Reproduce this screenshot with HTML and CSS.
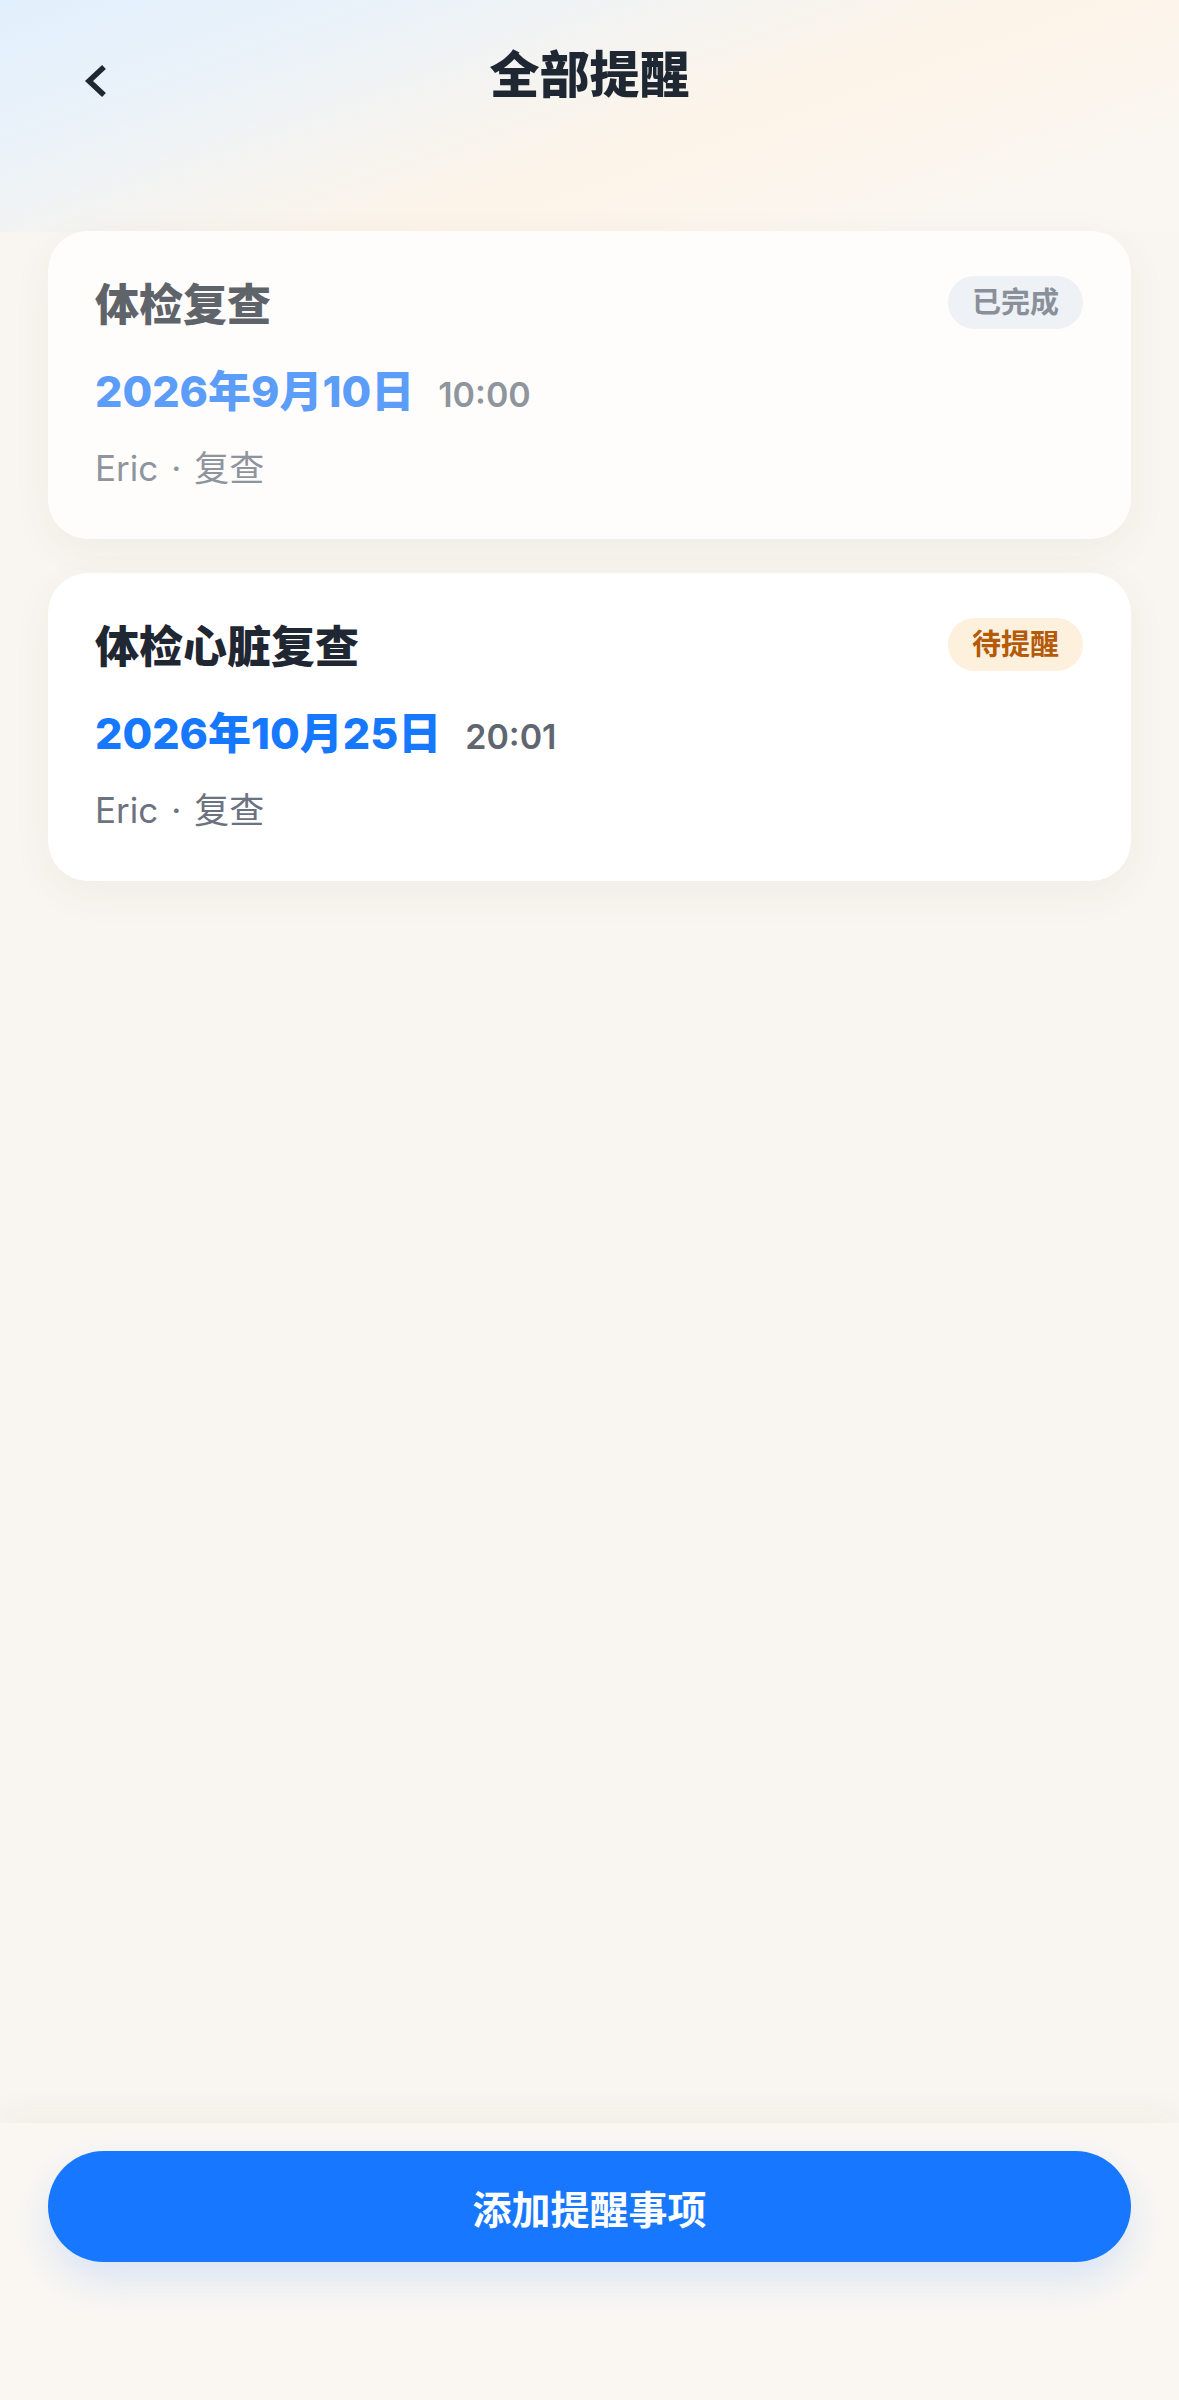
FILE: index.html
```html
<!DOCTYPE html>
<html lang="zh-CN">
<head>
  <meta charset="UTF-8" />
  <meta name="viewport" content="width=device-width, initial-scale=1.0"/>
  <title>全部提醒</title>
  <link rel="stylesheet" href="styles.css">
</head>
<body>
  <header class="nav">
    <button class="back-btn" aria-label="返回">
      <svg width="24" height="34" viewBox="0 0 24 34">
        <polyline points="20,3 5,17 20,31" fill="none" stroke="#1f2733" stroke-width="5.5"/>
      </svg>
    </button>
    <h1>全部提醒</h1>
    <div></div>
  </header>

  <main class="list">
    <div class="card done">
      <div class="card-head">
        <span class="card-title">体检复查</span>
        <span class="badge">已完成</span>
      </div>
      <div class="date-row">
        <span class="date">2026年9月10日</span>
        <span class="time">10:00</span>
      </div>
      <div class="meta">Eric<span class="sep">·</span>复查</div>
    </div>

    <div class="card pending">
      <div class="card-head">
        <span class="card-title">体检心脏复查</span>
        <span class="badge">待提醒</span>
      </div>
      <div class="date-row">
        <span class="date">2026年10月25日</span>
        <span class="time">20:01</span>
      </div>
      <div class="meta">Eric<span class="sep">·</span>复查</div>
    </div>
  </main>

  <footer class="bottom-bar">
    <button class="add-btn">添加提醒事项</button>
  </footer>
</body>
</html>
```

FILE: styles.css
```css
body {
  font-family: Inter, "Noto Sans CJK SC", sans-serif;
  margin: 0;
  min-height: 100vh;
  display: flex;
  flex-direction: column;
  background:
    linear-gradient(160deg, #e2f0fd 0%, #eaf2f9 22%, #f6f4f0 42%, #fdf4e8 58%, #faf6f1 85%) top / 100% 232px no-repeat,
    #f9f6f1;
  color: #1f2733;
}
.nav {
  height: 150px;
  display: grid;
  grid-template-columns: 1fr auto 1fr;
  align-items: start;
}
.back-btn {
  justify-self: start;
  margin: 64px 0 0 84px;
  padding: 0;
  border: none;
  background: none;
  line-height: 0;
  cursor: pointer;
}
.nav h1 {
  margin: 51px 0 0;
  font-size: 50px;
  line-height: 48px;
  font-weight: 800;
  color: #1f2733;
}
.list {
  flex: 1;
  padding: 81px 48px 0;
  display: flex;
  flex-direction: column;
  gap: 34px;
}
.card {
  background: #fff;
  border-radius: 40px;
  padding: 48px 48px 49px 47px;
  box-shadow: 0 12px 40px rgba(80, 60, 30, 0.06);
}
.card-head {
  display: flex;
  justify-content: space-between;
  align-items: center;
  height: 53px;
}
.card-title {
  font-size: 44px;
  font-weight: 800;
  line-height: 53px;
}
.badge {
  height: 53px;
  line-height: 53px;
  padding: 0 24px;
  margin-bottom: 6px;
  border-radius: 27px;
  font-size: 29px;
  font-weight: 700;
}
.date-row {
  margin-top: 35px;
  height: 48px;
  display: flex;
  align-items: baseline;
  gap: 24px;
  line-height: 48px;
}
.date {
  font-size: 43px;
  font-weight: 800;
}
.time {
  font-size: 34px;
  font-weight: 600;
}
.meta {
  margin-top: 31px;
  font-size: 35px;
  line-height: 44px;
}
.sep {
  margin: 0 13px;
}

/* completed item is faded */
.done {
  background: #fffdfb;
}
.done .card-title { color: #5f646b; }
.done .date { color: #5b9df8; }
.done .time,
.done .meta { color: #8f959d; }
.done .badge {
  background: #eef1f5;
  color: #8a9099;
}

.pending .card-title { color: #1f2733; }
.pending .date { color: #1677ff; }
.pending .time { color: #5f6670; }
.pending .meta { color: #6b7280; }
.pending .badge {
  background: #fdf0dd;
  color: #b45a09;
}

.bottom-bar {
  background: #faf7f3;
  padding: 28px 48px 138px;
  box-shadow: 0 -14px 30px rgba(60, 50, 30, 0.035);
}
.add-btn {
  display: block;
  width: 100%;
  height: 111px;
  border: none;
  border-radius: 56px;
  background: #1778ff;
  color: #fff;
  font-family: inherit;
  font-size: 39px;
  font-weight: 700;
  cursor: pointer;
  box-shadow: 0 18px 40px rgba(22, 119, 255, 0.14);
}
```
